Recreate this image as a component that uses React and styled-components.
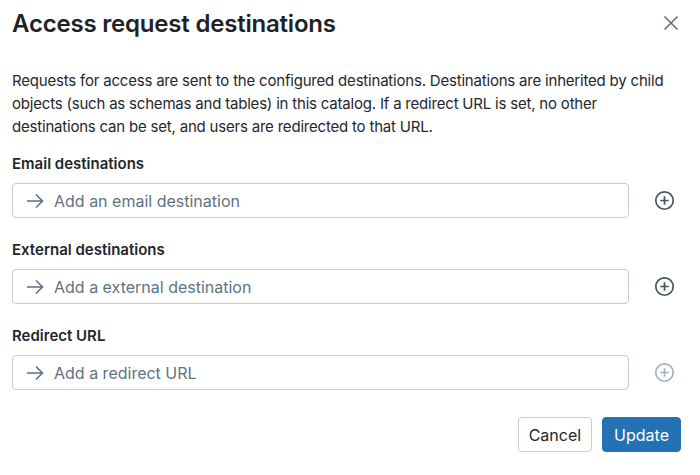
import React from 'react';
import styled, { createGlobalStyle } from 'styled-components';

const Global = createGlobalStyle`
  html, body {
    margin: 0;
    background: #ffffff;
    font-family: Inter, "Open Sans", "Liberation Sans", sans-serif;
    color: #1f272d;
  }
  * { box-sizing: border-box; }
`;

const Dialog = styled.div`
  width: 700px;
  height: 475px;
  padding: 8px 19px 0 12px;
  display: flex;
  flex-direction: column;
`;

const Header = styled.div`
  display: flex;
  align-items: center;
  justify-content: space-between;
  height: 30px;
`;

const Title = styled.h1`
  margin: 0;
  font-size: 24px;
  font-weight: 600;
  letter-spacing: -0.2px;
  color: #1f2328;
`;

const Close = styled.button`
  border: 0;
  background: none;
  padding: 0;
  width: 20px;
  height: 20px;
  display: flex;
  align-items: center;
  justify-content: center;
  color: #5f7281;
`;

const Intro = styled.p`
  margin: 31px 0 0;
  font-size: 15px;
  line-height: 23px;
  letter-spacing: -0.2px;
  color: #1f272d;
`;

const Section = styled.div`
  display: flex;
  flex-direction: column;
  margin-top: ${p => p.$first ? '15px' : '21px'};
`;

const Label = styled.div`
  font-size: 15px;
  font-weight: 600;
  line-height: 22px;
  color: #1f272d;
`;

const Row = styled.div`
  display: flex;
  align-items: center;
  gap: 18px;
  margin-top: 8px;
`;

const Field = styled.div`
  flex: 1;
  height: 35px;
  border: 1px solid #c0cdd8;
  border-radius: 4px;
  display: flex;
  align-items: center;
  padding-left: 12px;
  gap: 9px;
  font-size: 16px;
  color: #5f7281;
`;

const AddButton = styled.button`
  width: 34px;
  height: 34px;
  border: 0;
  background: none;
  padding: 0;
  display: flex;
  align-items: center;
  justify-content: center;
  color: ${p => p.disabled ? '#a3b2bf' : '#445461'};
`;

const Footer = styled.div`
  display: flex;
  justify-content: flex-end;
  gap: 10px;
  margin-top: 27px;
`;

const Button = styled.button`
  height: 35px;
  padding: 0 ${p => p.$primary ? '11px' : '10px'};
  border-radius: 4px;
  font-family: inherit;
  font-size: 16px;
  border: 1px solid ${p => p.$primary ? '#2272b4' : '#c0cdd8'};
  background: ${p => p.$primary ? '#2272b4' : '#ffffff'};
  color: ${p => p.$primary ? '#ffffff' : '#1f272d'};
`;

const Arrow = () => (
  <svg width="20" height="20" viewBox="0 0 20 20" fill="none" stroke="currentColor" strokeWidth="1.6">
    <path d="M2 10h15.5M11 3.5l6.5 6.5-6.5 6.5" />
  </svg>
);

const PlusCircle = () => (
  <svg width="21" height="21" viewBox="0 0 20 20" fill="none" stroke="currentColor" strokeWidth="1.6">
    <circle cx="10" cy="10" r="8.3" />
    <path d="M10 6v8M6 10h8" />
  </svg>
);

const CloseIcon = () => (
  <svg width="16" height="16" viewBox="0 0 16 16" fill="none" stroke="currentColor" strokeWidth="1.6">
    <path d="M1.5 1.5l13 13M14.5 1.5l-13 13" />
  </svg>
);

const fields = [
  { label: 'Email destinations', placeholder: 'Add an email destination' },
  { label: 'External destinations', placeholder: 'Add a external destination' },
  { label: 'Redirect URL', placeholder: 'Add a redirect URL', disabled: true },
];

export default function App() {
  return (
    <>
      <Global />
      <Dialog>
        <Header>
          <Title>Access request destinations</Title>
          <Close aria-label="Close"><CloseIcon /></Close>
        </Header>
        <Intro>
          Requests for access are sent to the configured destinations. Destinations are inherited by child
          objects (such as schemas and tables) in this catalog. If a redirect URL is set, no other
          destinations can be set, and users are redirected to that URL.
        </Intro>
        {fields.map((f, i) => (
          <Section key={f.label} $first={i === 0}>
            <Label>{f.label}</Label>
            <Row>
              <Field>
                <Arrow />
                <span>{f.placeholder}</span>
              </Field>
              <AddButton disabled={f.disabled}><PlusCircle /></AddButton>
            </Row>
          </Section>
        ))}
        <Footer>
          <Button>Cancel</Button>
          <Button $primary>Update</Button>
        </Footer>
      </Dialog>
    </>
  );
}
